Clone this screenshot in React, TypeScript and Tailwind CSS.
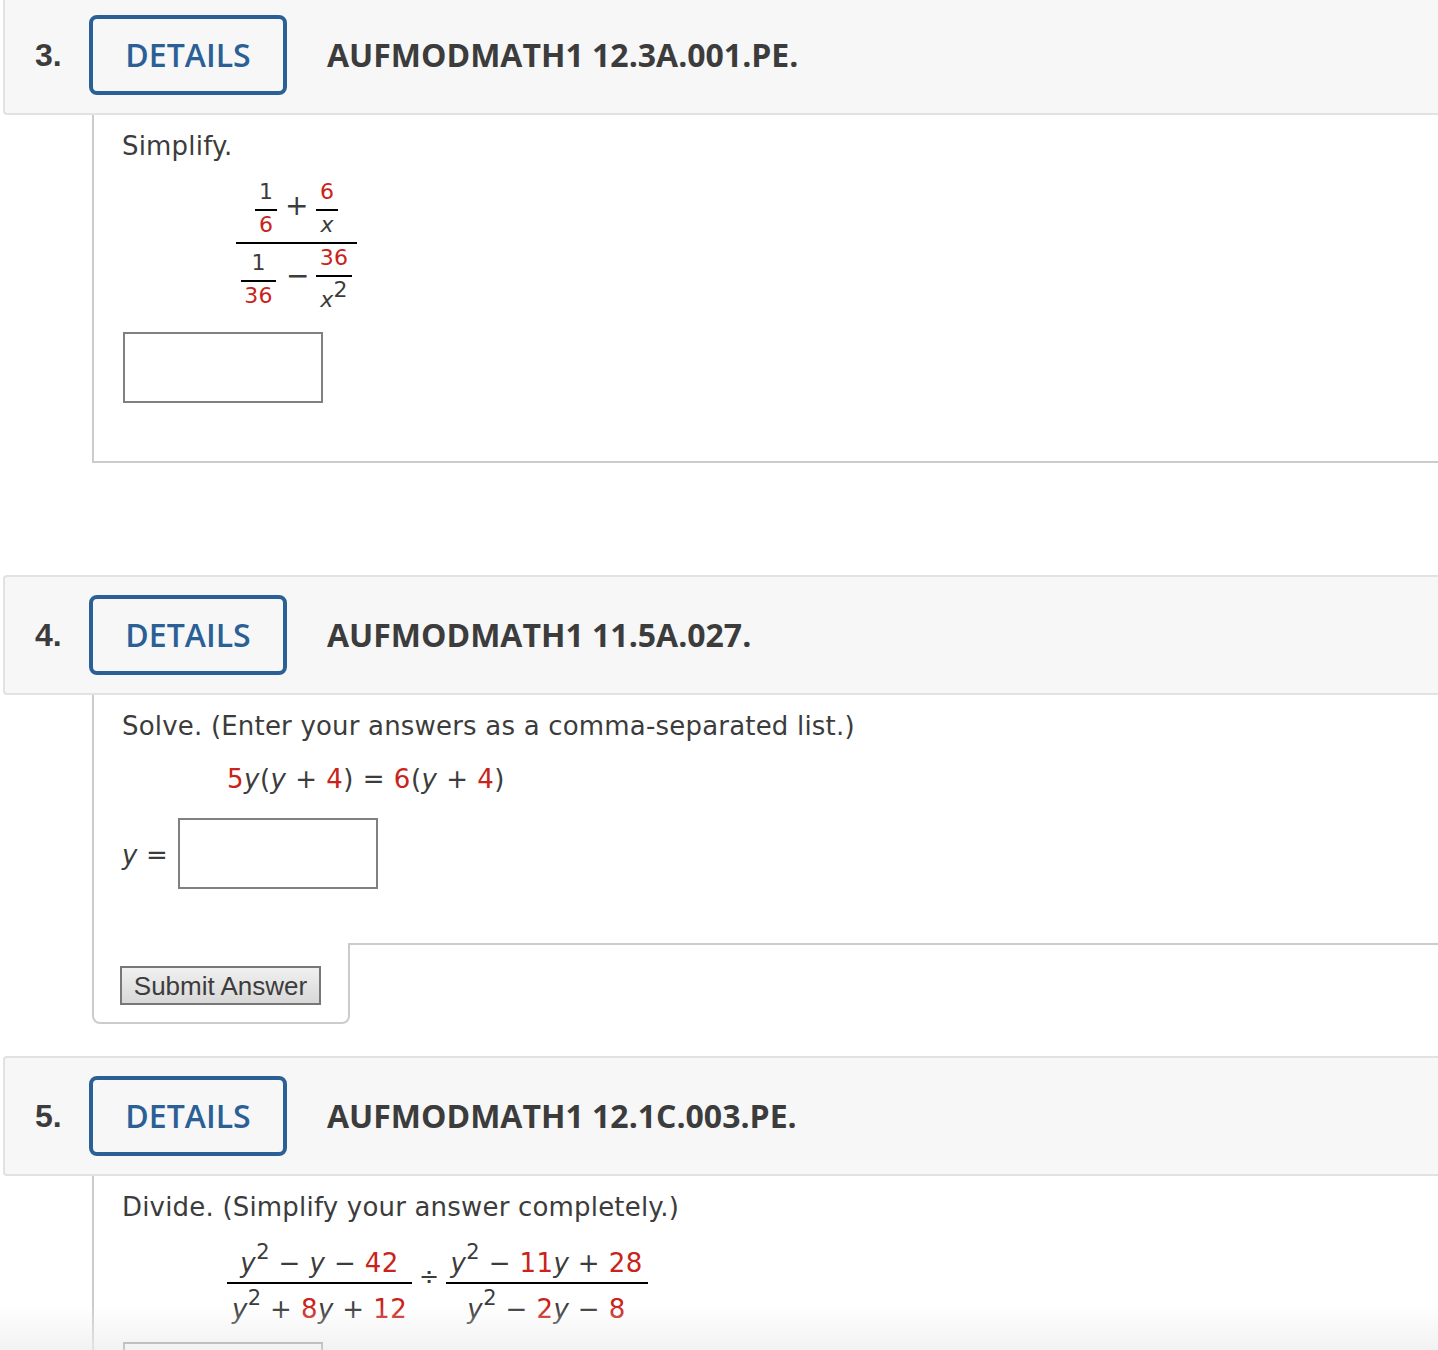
import React from "react";

const R = ({ children }: { children: React.ReactNode }) => (
  <span className="text-[#c9231a]">{children}</span>
);
const V = ({ children }: { children: React.ReactNode }) => <i>{children}</i>;
const Sq = () => <span className="text-[21px] leading-none relative -top-[13px]">2</span>;

const Frac = ({ top, bottom, w, size = "text-[22px]", gap = "pt-[3px]" }: any) => (
  <span className={`inline-flex flex-col items-center ${size} leading-none`} style={{ width: w }}>
    <span className="w-full text-center pb-[6px] border-b-2 border-[#000] whitespace-nowrap">{top}</span>
    <span className={`w-full text-center ${gap} whitespace-nowrap`}>{bottom}</span>
  </span>
);

const Header = ({ num, title, first }: { num: string; title: string; first?: boolean }) => (
  <div
    className={`ml-[3px] h-[120px] border-2 border-r-0 border-[#e2e2e2] rounded-l-[4px] bg-[#f7f7f7] tracking-normal flex items-center ${first ? "-mt-[5px]" : ""}`}
  >
    <div className="w-[84px] pl-[30px] font-['Liberation_Sans'] font-bold text-[32px] text-[#3c3c3c]">{num}</div>
    <div className="w-[198px] h-[80px] border-4 border-[#2a6096] rounded-[8px] flex items-center justify-center font-['Open_Sans'] font-semibold text-[32px] text-[#2a6096]">
      DETAILS
    </div>
    <div className="ml-[40px] font-['Open_Sans'] font-bold text-[32px] text-[#3c3c3c]">{title}</div>
  </div>
);

const Answer = () => <div className="ml-[1px] w-[200px] h-[71px] border-2 border-[#808080] bg-white" />;

export default function App() {
  return (
    <div className="relative w-[1438px] h-[1350px] overflow-hidden bg-white font-['DejaVu_Sans',sans-serif] text-[26px] tracking-[0.19px] text-[#3c3c3c]">
      <Header num="3." title="AUFMODMATH1 12.3A.001.PE." first />
      <div className="ml-[92px] h-[348px] border-l-2 border-b-2 border-[#cccccc] pl-[28px] pt-[13px]">
        <p className="leading-[36px]">Simplify.</p>
        <div className="ml-[114px] mt-[17px] w-[121px] h-[132px] flex flex-col items-stretch">
          <div className="h-[63px] shrink-0 border-b-2 border-black flex justify-center gap-[8px]">
            <Frac w={22} top="1" bottom={<R>6</R>} />
            <span className="w-[23px] h-[50px] leading-[50px] text-center text-[28px]">+</span>
            <Frac w={22} top={<R>6</R>} bottom={<V>x</V>} />
          </div>
          <div className="flex pl-[5px] pt-[3px] gap-[10px] items-start">
            <span className="flex mt-[5px]">
              <Frac w={35} top="1" bottom={<R>36</R>} />
            </span>
            <span className="w-[19px] mt-[11px] h-[36px] leading-[36px] text-center text-[28px]">−</span>
            <span className="flex ml-[1px]">
              <Frac
                w={36}
                top={<R>36</R>}
                gap="pt-[12px]"
                bottom={
                  <span>
                    <V>x</V>
                    <span className="text-[22px] leading-none relative -top-[10px]">2</span>
                  </span>
                }
              />
            </span>
          </div>
        </div>
        <div className="mt-[19px]">
          <Answer />
        </div>
      </div>

      <div className="mt-[112px]">
        <Header num="4." title="AUFMODMATH1 11.5A.027." />
      </div>
      <div className="ml-[92px]">
        <div className="h-[248px] border-l-2 border-[#cccccc] pl-[28px] pt-[13px]">
          <p className="leading-[36px]">Solve. (Enter your answers as a comma-separated list.)</p>
          <p className="ml-[105px] mt-[17px] leading-[36px] tracking-[0.5px]">
            <R>5</R><V>y</V>(<V>y</V> + <R>4</R>) = <R>6</R>(<V>y</V> + <R>4</R>)
          </p>
          <div className="mt-[21px] flex items-center">
            <span className="w-[55px] pt-[3px]"><V>y</V> =</span>
            <Answer />
          </div>
        </div>
        <div className="flex h-[81px]">
          <div className="w-[258px] border-l-2 border-r-2 border-b-2 border-[#cccccc] rounded-b-[8px] pl-[26px] pt-[23px]">
            <button className="block w-[201px] h-[39px] border-2 border-[#777777] bg-gradient-to-b from-[#f0f0f0] to-[#d8d8d8] font-['Liberation_Sans'] text-[26px] tracking-normal leading-none text-[#3c3c3c]">
              Submit Answer
            </button>
          </div>
          <div className="flex-1 border-t-2 border-[#cccccc]" />
        </div>
      </div>

      <div className="mt-[32px]">
        <Header num="5." title="AUFMODMATH1 12.1C.003.PE." />
      </div>
      <div className="ml-[92px] h-[200px] border-l-2 border-[#cccccc] pl-[28px] pt-[13px]">
        <p className="leading-[36px]">Divide. (Simplify your answer completely.)</p>
        <div className="ml-[105px] mt-[25px] flex items-start gap-[7px] tracking-[0.4px]">
          <Frac
            w={185}
            size="text-[26px]"
            gap="pt-[12px]"
            top={<span><V>y</V><Sq /> − <V>y</V> − <R>42</R></span>}
            bottom={<span><V>y</V><Sq /> + <R>8</R><V>y</V> + <R>12</R></span>}
          />
          <span className="mt-[9px] -mr-px h-[36px] leading-[36px] text-[24px]">÷</span>
          <Frac
            w={202}
            size="text-[26px]"
            gap="pt-[12px]"
            top={<span><V>y</V><Sq /> − <R>11</R><V>y</V> + <R>28</R></span>}
            bottom={<span><V>y</V><Sq /> − <R>2</R><V>y</V> − <R>8</R></span>}
          />
        </div>
        <div className="mt-[20px]">
          <Answer />
        </div>
      </div>

      <div className="absolute left-0 right-0 bottom-0 h-[45px] bg-gradient-to-b from-transparent to-[#ececec]/70" />
    </div>
  );
}
